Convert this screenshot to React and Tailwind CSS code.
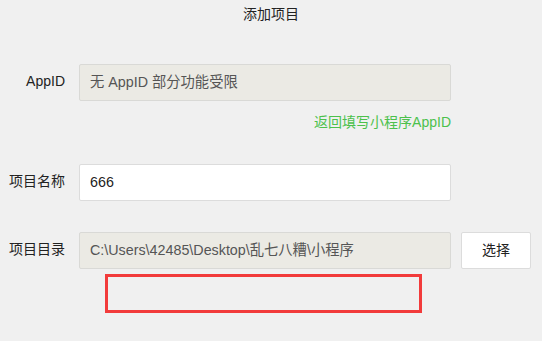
import React from 'react';

const font = { fontFamily: '"Liberation Sans", "Noto Sans CJK SC", sans-serif' };

function Row({ label, children, className = '' }) {
  return (
    <div className={`flex items-start ${className}`}>
      <div className="w-[65px] shrink-0 text-right text-[14px] leading-[34px] text-[#222]">{label}</div>
      <div className="ml-[14px] flex gap-[10px]">{children}</div>
    </div>
  );
}

export default function App() {
  return (
    <div className="w-[542px] h-[341px] overflow-hidden bg-[#f0f0f0]" style={font}>
      <div className="pt-[5px] text-center text-[14px] leading-[18px] text-[#222]">添加项目</div>

      <div className="mt-[41px]">
        <Row label="AppID">
          <div className="w-[372px] h-[37px] rounded-[2px] border border-[#d9d9d6] bg-[#ebeae4] px-[10px] text-[14.3px] leading-[35px] text-[#555]">
            无 AppID 部分功能受限
          </div>
        </Row>
        <div className="mt-[11px] w-[451px] text-right text-[14px] leading-[20px] text-[#4cc14c]">
          返回填写小程序AppID
        </div>

        <Row label="项目名称" className="mt-[32px]">
          <div className="w-[372px] h-[37px] rounded-[2px] border border-[#dcdcdc] bg-white px-[10px] text-[14.3px] leading-[35px] text-[#222]">
            666
          </div>
        </Row>

        <Row label="项目目录" className="mt-[31px]">
          <div className="w-[372px] h-[37px] rounded-[2px] border border-[#d9d9d6] bg-[#ebeae4] px-[10px] text-[14.3px] leading-[35px] text-[#555]">
            C:\Users\42485\Desktop\乱七八糟\小程序
          </div>
          <button className="w-[70px] h-[37px] rounded-[2px] border border-[#dcdcdc] bg-white text-[14px] text-[#222]">
            选择
          </button>
        </Row>

        <div className="ml-[105px] mt-[5px] w-[317px] h-[39px] border-[3px] border-[#f23b3b]" />
      </div>
    </div>
  );
}
